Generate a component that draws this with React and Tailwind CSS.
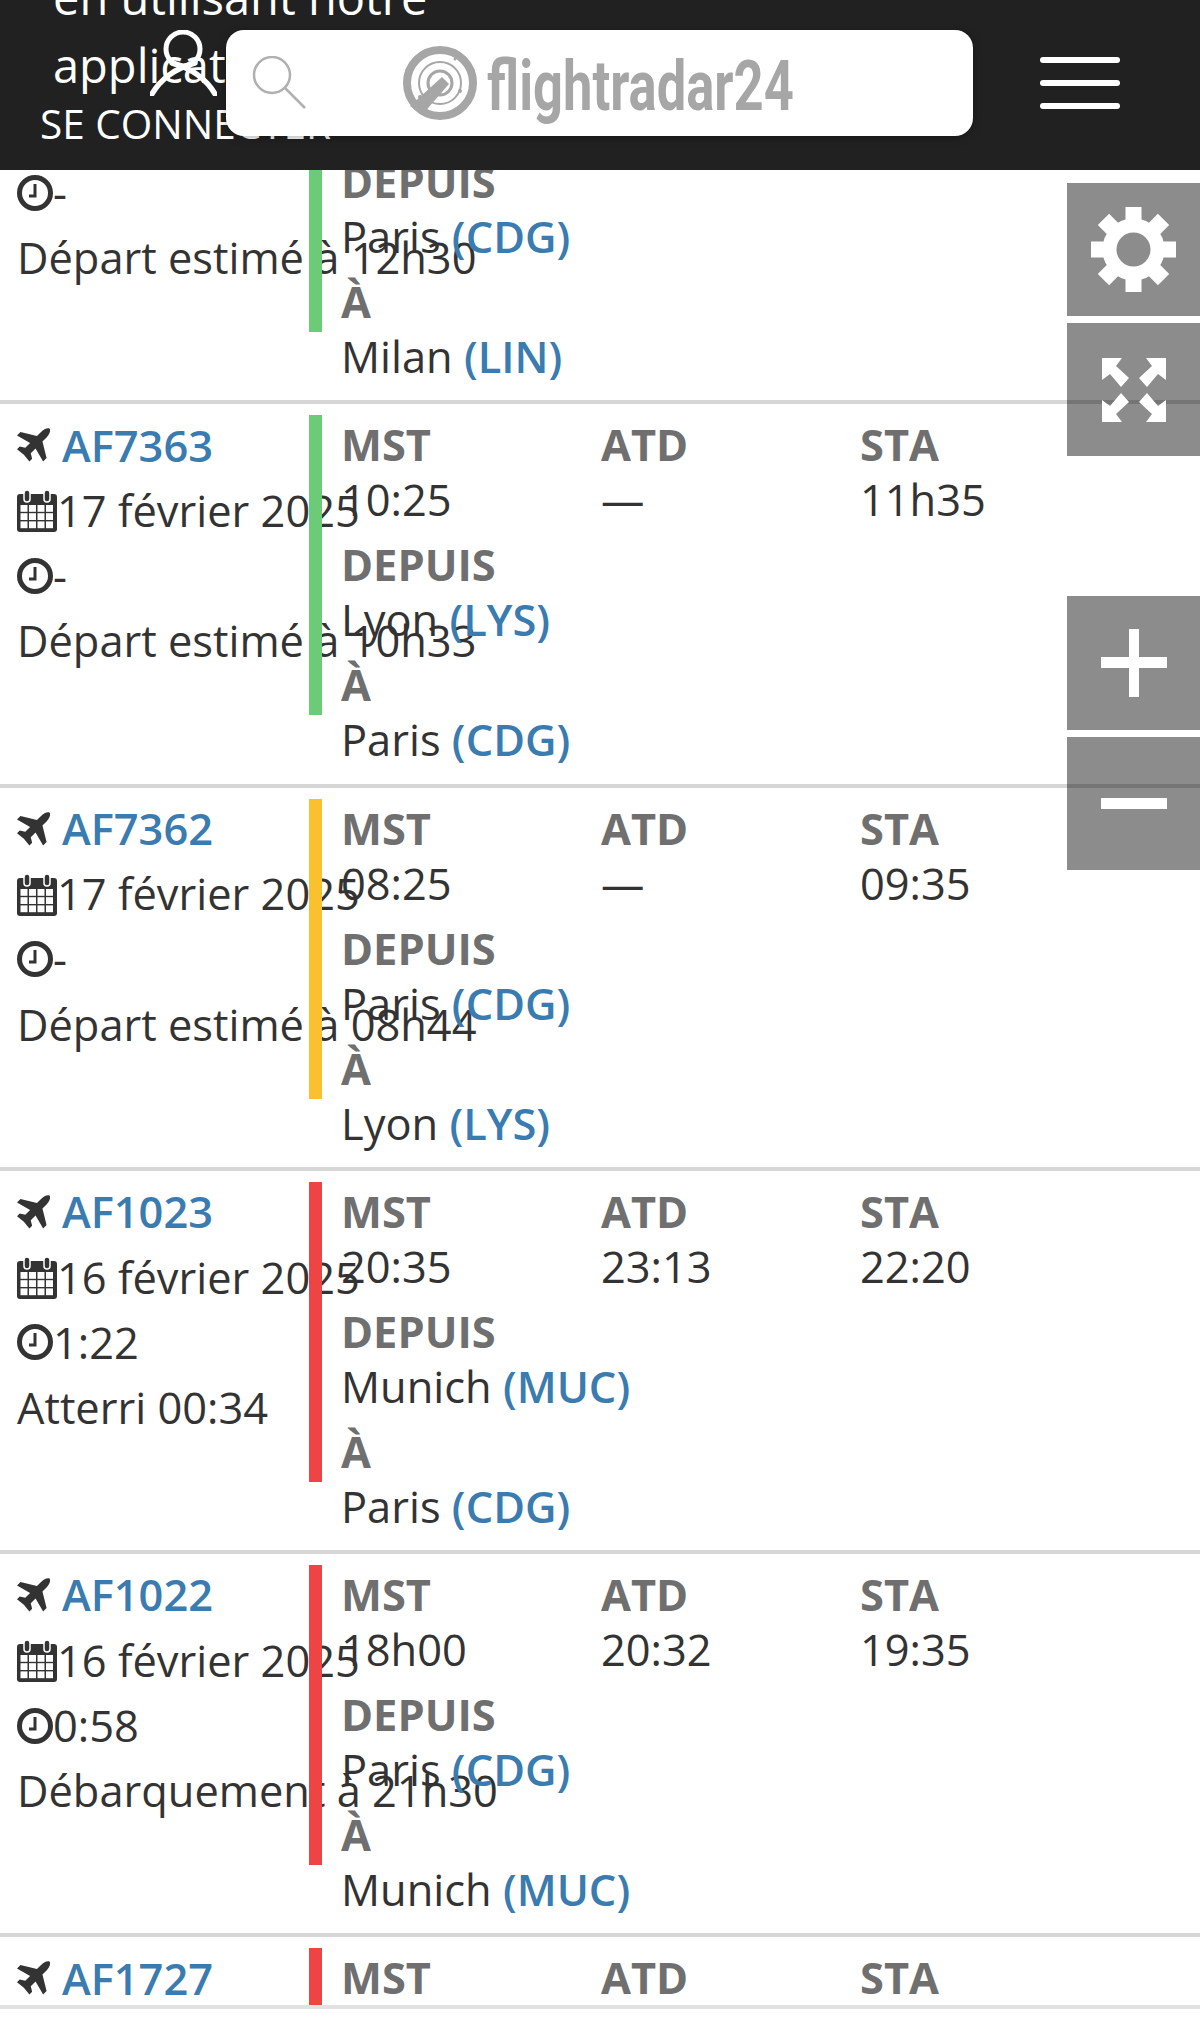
import React from "react";

const Plane = () => (
  <svg viewBox="2 2 96 96" className="w-[33px] h-[34px] shrink-0 fill-[#333333]">
    <path d="M97 3C92 -1 80 4 72 12L60 24L12 12L2 22L40 44L26 58L10 54L2 62L22 78L38 98L46 90L42 74L56 60L78 98L88 88L76 40L88 28C96 20 101 8 97 3Z" />
  </svg>
);

const Calendar = () => {
  const cells = [];
  for (let r = 0; r < 3; r++) for (let c = 0; c < 4; c++) cells.push([3.5 + c * 8.5, 16 + r * 8.2]);
  return (
    <svg viewBox="0 0 40 43" className="w-[40px] h-[43px] shrink-0">
      <rect x="0" y="5" width="40" height="38" rx="3" fill="#333333" />
      <rect x="7" y="1" width="6" height="12" rx="3" fill="#333333" stroke="#ffffff" strokeWidth="1.5" />
      <rect x="27" y="1" width="6" height="12" rx="3" fill="#333333" stroke="#ffffff" strokeWidth="1.5" />
      {cells.map(([x, y]) => (
        <rect key={`${x}-${y}`} x={x} y={y} width="7" height="6.8" fill="#ffffff" />
      ))}
    </svg>
  );
};

const Clock = () => (
  <svg viewBox="0 0 36 36" className="w-[36px] h-[36px] shrink-0" fill="none" stroke="#333333">
    <circle cx="18" cy="18" r="15.5" strokeWidth="5" />
    <path d="M18 9V21H12" strokeWidth="3" />
  </svg>
);

const Gear = () => (
  <svg viewBox="0 0 85 85" className="w-[85px] h-[85px] fill-white">
    <circle cx="42.5" cy="42.5" r="24" fill="none" stroke="#ffffff" strokeWidth="14" />
    {[0, 45, 90, 135, 180, 225, 270, 315].map((a) => (
      <rect key={a} x="34.5" y="0" width="16" height="20" transform={`rotate(${a} 42.5 42.5)`} />
    ))}
  </svg>
);

const Expand = () => (
  <svg viewBox="0 0 64 64" className="w-[64px] h-[64px] fill-white">
    <path d="M0 0L20 0L14 8L27 20L19 29L8 16L0 22Z" />
    <path d="M64 0L44 0L50 8L37 20L45 29L56 16L64 22Z" />
    <path d="M0 64L20 64L14 56L27 44L19 35L8 48L0 42Z" />
    <path d="M64 64L44 64L50 56L37 44L45 35L56 48L64 42Z" />
  </svg>
);

const Logo = () => (
  <svg viewBox="0 0 76 76" className="w-[76px] h-[76px]" fill="none" stroke="#a6a6a6">
    <circle cx="38" cy="38" r="33" strokeWidth="8" />
    <circle cx="38" cy="38" r="21" strokeWidth="2" />
    <circle cx="38" cy="38" r="12" strokeWidth="3" />
    <path d="M40 32L47 39L20 70L8 61Z" fill="#a6a6a6" stroke="none" />
    <circle cx="53" cy="14" r="1.5" fill="#a6a6a6" stroke="none" />
    <circle cx="58" cy="46" r="2" fill="#a6a6a6" stroke="none" />
    <circle cx="18" cy="52" r="2" fill="#a6a6a6" stroke="none" />
  </svg>
);

const Air = ({ city, code }) => (
  <div className="h-[55px] leading-[55px] mb-[10px] text-[#333333] whitespace-nowrap">
    {city} <span className="text-[#3a7bb0] font-semibold">({code})</span>
  </div>
);

const Label = ({ children }) => (
  <div className="h-[55px] leading-[55px] font-bold text-[#6f6f6f]">{children}</div>
);

const Value = ({ children }) => (
  <div className="h-[55px] leading-[55px] mb-[10px] text-[#333333]">{children}</div>
);

const Row = ({ d }) => (
  <div className="flex h-[383.25px] border-b-[4px] border-[#d6d6d6] pt-[11px] shrink-0">
    <div className="w-[309px] shrink-0 pl-[17px] -mt-[3px] whitespace-nowrap text-[#333333]">
      {d.partial ? (
        <div className="h-[131px]" />
      ) : (
        <>
          <div className="flex items-center h-[66px] gap-[12px]">
            <Plane />
            <span className="text-[#3a7bb0] font-semibold">{d.id}</span>
          </div>
          {d.date && (
            <div className="flex items-center h-[65px]">
              <Calendar />
              <span>{d.date}</span>
            </div>
          )}
        </>
      )}
      {d.status && (
        <>
          <div className="flex items-center h-[65px]">
            <Clock />
            <span>{d.dur}</span>
          </div>
          <div className="h-[65px] leading-[65px]">{d.status}</div>
        </>
      )}
    </div>
    <div className={`relative w-[13px] h-[300px] shrink-0 ${d.bar}`} />
    <div className="flex-1 pl-[19px] mt-[2px]">
      {d.partial ? (
        <div className="h-[120px]" />
      ) : (
        <div className="grid grid-cols-[260px_259px_1fr]">
          <div>
            <Label>MST</Label>
            {d.mst && <Value>{d.mst}</Value>}
          </div>
          <div>
            <Label>ATD</Label>
            {d.atd && <Value>{d.atd}</Value>}
          </div>
          <div>
            <Label>STA</Label>
            {d.sta && <Value>{d.sta}</Value>}
          </div>
        </div>
      )}
      {d.from && (
        <>
          <Label>DEPUIS</Label>
          <Air city={d.from[0]} code={d.from[1]} />
          <Label>À</Label>
          <Air city={d.to[0]} code={d.to[1]} />
        </>
      )}
    </div>
  </div>
);

const rows = [
  { partial: true, dur: "-", status: "Départ estimé à 12h30", bar: "bg-[#6bcb77]", from: ["Paris", "CDG"], to: ["Milan", "LIN"] },
  { id: "AF7363", date: "17 février 2025", dur: "-", status: "Départ estimé à 10h33", mst: "10:25", atd: "—", sta: "11h35", bar: "bg-[#6bcb77]", from: ["Lyon", "LYS"], to: ["Paris", "CDG"] },
  { id: "AF7362", date: "17 février 2025", dur: "-", status: "Départ estimé à 08h44", mst: "08:25", atd: "—", sta: "09:35", bar: "bg-[#fbc02d]", from: ["Paris", "CDG"], to: ["Lyon", "LYS"] },
  { id: "AF1023", date: "16 février 2025", dur: "1:22", status: "Atterri 00:34", mst: "20:35", atd: "23:13", sta: "22:20", bar: "bg-[#ef4444]", from: ["Munich", "MUC"], to: ["Paris", "CDG"] },
  { id: "AF1022", date: "16 février 2025", dur: "0:58", status: "Débarquement à 21h30", mst: "18h00", atd: "20:32", sta: "19:35", bar: "bg-[#ef4444]", from: ["Paris", "CDG"], to: ["Munich", "MUC"] },
  { id: "AF1727", bar: "bg-[#ef4444]" },
];

export default function App() {
  return (
    <div className="relative w-[1200px] h-[2030px] overflow-hidden bg-white font-['Open_Sans',sans-serif] text-[43.4px]">
      <header className="absolute top-0 left-0 w-full h-[170px] overflow-hidden bg-[#212121] z-10 text-white">
        <div className="-mt-[37px] whitespace-nowrap">
          <div className="pl-[53px] text-[47px] leading-[68px] w-[520px] whitespace-normal">en utilisant notre application</div>
          <div className="pl-[40px] text-[40.5px] leading-[54px] -mt-[2px]">SE CONNECTER</div>
        </div>
        <svg viewBox="0 0 67 66" className="absolute left-[150px] top-[30px] w-[67px] h-[66px]" fill="none" stroke="#ffffff" strokeLinecap="round">
          <circle cx="33" cy="19" r="17" strokeWidth="5" />
          <path d="M2 64C10 50 25 38 45 33M65 64C57 50 42 38 22 33" strokeWidth="5.5" />
        </svg>
        <div className="absolute left-[226px] top-[30px] w-[747px] h-[106px] rounded-[18px] bg-white shadow-[0_2px_8px_rgba(0,0,0,0.3)] flex items-center">
          <svg viewBox="0 0 54 54" className="ml-[26px] w-[54px] h-[54px] shrink-0" fill="none" stroke="#b0b0b0">
            <circle cx="20" cy="19" r="18" strokeWidth="2.5" />
            <path d="M33 32L53 52" strokeWidth="2.5" />
          </svg>
          <div className="ml-[96px] shrink-0 flex items-center">
            <Logo />
          </div>
          <span className="ml-[9px] mt-[5px] font-['Roboto',sans-serif] font-bold text-[#a6a6a6] text-[70px] leading-none origin-left scale-x-[0.75] whitespace-nowrap">flightradar24</span>
        </div>
        <div className="absolute left-[1040px] top-[57px] w-[80px] flex flex-col gap-[17px]">
          <div className="h-[6px] rounded-full bg-white" />
          <div className="h-[6px] rounded-full bg-white" />
          <div className="h-[6px] rounded-full bg-white" />
        </div>
      </header>

      <main className="h-[2009px] overflow-hidden border-b-[4px] border-[#e2e2e2] pt-[21px]">
        {rows.map((d, i) => (
          <Row key={i} d={d} />
        ))}
      </main>

      <div className="absolute top-[183px] right-0 w-[133px] flex flex-col gap-[7px] z-20">
        <button className="h-[133px] bg-black/45 flex items-center justify-center"><Gear /></button>
        <button className="h-[133px] bg-black/45 flex items-center justify-center"><Expand /></button>
      </div>
      <div className="absolute top-[596px] right-0 w-[133px] flex flex-col gap-[7px] z-20">
        <button className="h-[134px] bg-black/45 flex items-center justify-center">
          <svg viewBox="0 0 66 68" className="w-[66px] h-[68px] fill-white">
            <rect x="28" y="0" width="10" height="68" />
            <rect x="0" y="28" width="66" height="11" />
          </svg>
        </button>
        <button className="h-[133px] bg-black/45 flex items-center justify-center">
          <svg viewBox="0 0 66 11" className="w-[66px] h-[11px] fill-white">
            <rect x="0" y="0" width="66" height="11" />
          </svg>
        </button>
      </div>
    </div>
  );
}
